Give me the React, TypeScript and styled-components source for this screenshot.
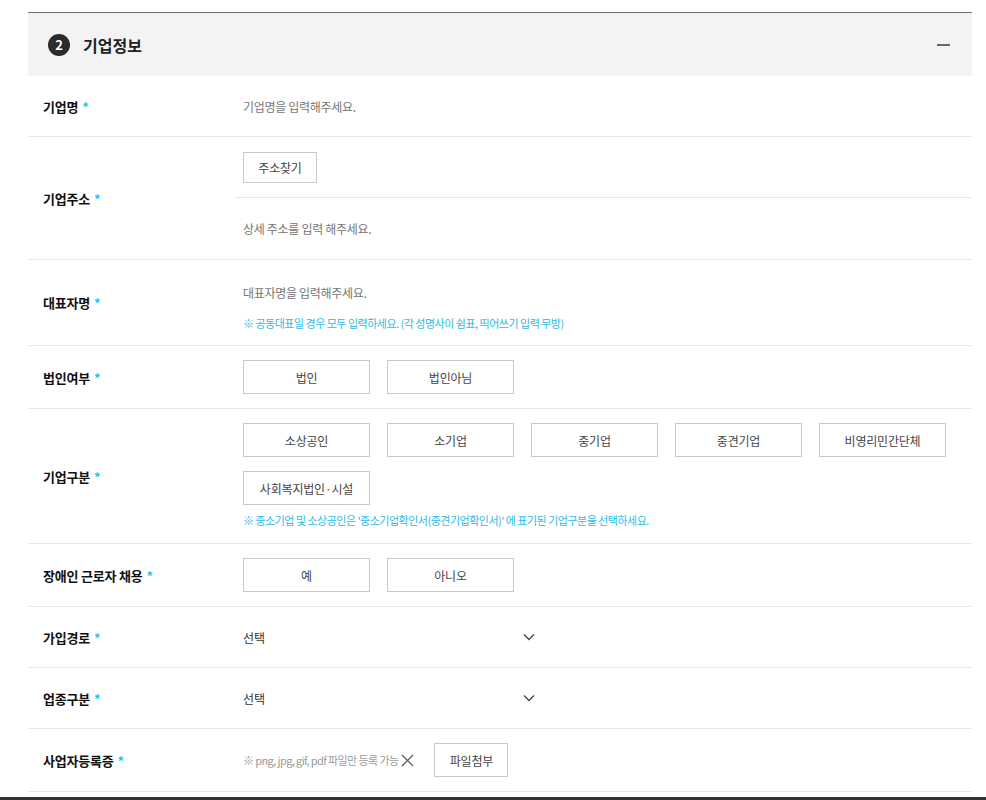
import React from "react"
import styled, { createGlobalStyle } from "styled-components"

const Global = createGlobalStyle`
  html, body {
    margin: 0;
    padding: 0;
    background: #fff;
  }
  body {
    font-family: "Noto Sans CJK KR", "Noto Sans", sans-serif;
    color: #222;
  }
  * { box-sizing: border-box; }
`

const Page = styled.div`
  width: 986px;
  height: 800px;
  overflow: hidden;
  display: flex;
  flex-flow: column;
  padding-top: 12px;
`
const Section = styled.section`
  margin-left: 28px;
  width: 944px;
  border-top: 1px solid #6f6f6f;
`
const Header = styled.div`
  display: flex;
  align-items: center;
  height: 63px;
  padding: 0 22px 0 20px;
  background-color: #f3f3f5;
`
const StepBadge = styled.span`
  display: flex;
  justify-content: center;
  align-items: center;
  width: 22px;
  height: 22px;
  border-radius: 50%;
  background-color: #2b2b2b;
  color: #fff;
  font-size: 13px;
  font-weight: bold;
`
const Title = styled.h2`
  margin: 0 0 0 13px;
  font-size: 16px;
  font-weight: bold;
  color: #222;
`
const Minus = styled.span`
  margin-left: auto;
  width: 13px;
  height: 2px;
  background-color: #666;
`
const Row = styled.div`
  display: grid;
  grid-template-columns: 207px 1fr;
  border-bottom: 1px solid #e6e6e6;
`
const Label = styled.div`
  display: flex;
  align-items: center;
  padding-left: 15px;
  font-size: 13px;
  font-weight: bold;
  color: #111;
  letter-spacing: -0.2px;
`
const Star = styled.span`
  margin-left: 4px;
  color: #2cc0ee;
`
const Value = styled.div<{ $pad?: string }>`
  display: flex;
  flex-flow: column;
  justify-content: center;
  padding: ${p => p.$pad ?? "14px 0 14px 8px"};
`
const SubBlock = styled.div<{ $divide?: boolean }>`
  display: flex;
  align-items: center;
  min-height: 61px;
  padding-left: 8px;
  border-bottom: ${p => (p.$divide ? "1px solid #e6e6e6" : "none")};
`
const TextInput = styled.input`
  width: 400px;
  height: 32px;
  padding: 0;
  border: none;
  outline: none;
  font-family: inherit;
  font-size: 12px;
  letter-spacing: -0.3px;
  color: #333;
  background: transparent;

  ::placeholder {
    color: #8a8a8a;
  }
`
const Note = styled.p`
  margin: 7px 0 0;
  font-size: 11px;
  line-height: 16px;
  color: #2cbbe8;
  letter-spacing: -0.5px;
`
const Buttons = styled.div`
  display: flex;
  flex-wrap: wrap;
  gap: 14px 17px;
`
const OptionButton = styled.button.attrs({ type: "button" })<{ $w?: number; $h?: number }>`
  width: ${p => p.$w ?? 127}px;
  height: ${p => p.$h ?? 34}px;
  padding: 0;
  border: 1px solid #c9c9c9;
  background-color: #fff;
  font-family: inherit;
  font-size: 12px;
  letter-spacing: -0.2px;
  color: #444;
  cursor: pointer;
`
const SelectBox = styled.div`
  display: flex;
  align-items: center;
  justify-content: space-between;
  width: 292px;
  height: 32px;
  font-size: 12px;
  color: #333;
`
const FileLine = styled.div`
  display: flex;
  align-items: center;
`
const FileHint = styled.span`
  font-size: 11px;
  color: #9a9a9a;
  letter-spacing: -0.6px;
`
const ClearButton = styled.span`
  display: flex;
  margin: 0 20px 0 3px;
  color: #555;
`
const Footer = styled.div`
  margin-top: 5px;
  height: 10px;
  background-color: #333;
`

function Chevron() {
  return (
    <svg width="12" height="8" viewBox="0 0 12 8" fill="none">
      <path d="M1 1.5 L6 6.5 L11 1.5" stroke="#444" strokeWidth="1.3" />
    </svg>
  )
}

function Cross() {
  return (
    <svg width="13" height="13" viewBox="0 0 13 13" fill="none">
      <path d="M1 1 L12 12 M12 1 L1 12" stroke="#555" strokeWidth="1.2" />
    </svg>
  )
}

const companyTypes = ["소상공인", "소기업", "중기업", "중견기업", "비영리민간단체", "사회복지법인·시설"]

function Field({ label, children }: { label: string; children: React.ReactNode }) {
  return (
    <Row>
      <Label>
        {label}
        <Star>*</Star>
      </Label>
      {children}
    </Row>
  )
}

export default function App() {
  return (
    <Page>
      <Global />
      <Section>
        <Header>
          <StepBadge>2</StepBadge>
          <Title>기업정보</Title>
          <Minus />
        </Header>

        <Field label="기업명">
          <Value>
            <TextInput placeholder="기업명을 입력해주세요." />
          </Value>
        </Field>

        <Field label="기업주소">
          <Value $pad="0">
            <SubBlock $divide>
              <OptionButton $w={74} $h={31}>주소찾기</OptionButton>
            </SubBlock>
            <SubBlock>
              <TextInput placeholder="상세 주소를 입력 해주세요." />
            </SubBlock>
          </Value>
        </Field>

        <Field label="대표자명">
          <Value $pad="16px 0 14px 8px">
            <TextInput placeholder="대표자명을 입력해주세요." />
            <Note>※ 공동대표일 경우 모두 입력하세요. (각 성명사이 쉼표, 띄어쓰기 입력 무방)</Note>
          </Value>
        </Field>

        <Field label="법인여부">
          <Value>
            <Buttons>
              <OptionButton>법인</OptionButton>
              <OptionButton>법인아님</OptionButton>
            </Buttons>
          </Value>
        </Field>

        <Field label="기업구분">
          <Value $pad="14px 0 15px 8px">
            <Buttons>
              {companyTypes.map(t => (
                <OptionButton key={t}>{t}</OptionButton>
              ))}
            </Buttons>
            <Note>
              ※ 중소기업 및 소상공인은 '중소기업확인서(중견기업확인서)' 에 표기된 기업구분을 선택하세요.
            </Note>
          </Value>
        </Field>

        <Field label="장애인 근로자 채용">
          <Value>
            <Buttons>
              <OptionButton>예</OptionButton>
              <OptionButton>아니오</OptionButton>
            </Buttons>
          </Value>
        </Field>

        <Field label="가입경로">
          <Value>
            <SelectBox>
              선택
              <Chevron />
            </SelectBox>
          </Value>
        </Field>

        <Field label="업종구분">
          <Value>
            <SelectBox>
              선택
              <Chevron />
            </SelectBox>
          </Value>
        </Field>

        <Field label="사업자등록증">
          <Value>
            <FileLine>
              <FileHint>※ png, jpg, gif, pdf 파일만 등록 가능</FileHint>
              <ClearButton>
                <Cross />
              </ClearButton>
              <OptionButton $w={74}>파일첨부</OptionButton>
            </FileLine>
          </Value>
        </Field>
      </Section>
      <Footer />
    </Page>
  )
}
